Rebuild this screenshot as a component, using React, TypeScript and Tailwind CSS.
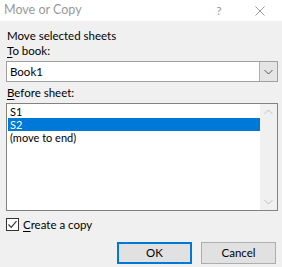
import React from "react";

function Check() {
  return (
    <svg width="11" height="11" viewBox="0 0 11 11">
      <path d="M1.5 5.5 L4.2 8.3 L9.5 2.2" fill="none" stroke="#333" strokeWidth="1.2" />
    </svg>
  );
}

function Chevron({ up }: { up?: boolean }) {
  return (
    <svg width="9" height="6" viewBox="0 0 9 6">
      <path
        d={up ? "M0.5 5 L4.5 1 L8.5 5" : "M0.5 1 L4.5 5 L8.5 1"}
        fill="none"
        stroke="currentColor"
        strokeWidth="1"
      />
    </svg>
  );
}

export default function App() {
  const sheets = ["S1", "S2", "(move to end)"];
  return (
    <div className="w-[282px] h-[267px] bg-[#f0f0f0] text-[11.5px] text-black font-['Segoe_UI','Lato',sans-serif] overflow-hidden">
      <div className="h-[21px] bg-white flex items-center pl-[4px] text-[#999]">
        <span className="flex-1 leading-none text-[12.5px]">Move or Copy</span>
        <span className="w-[12px] text-center mr-[30px] leading-none text-[12px]">?</span>
        <svg width="10" height="10" viewBox="0 0 10 10" className="mr-[17px]">
          <path d="M0.5 0.5 L9.5 9.5 M9.5 0.5 L0.5 9.5" stroke="#999" strokeWidth="1" />
        </svg>
      </div>

      <div className="px-[6px]">
        <div className="mt-[7px] leading-[15px] pl-[1px]">Move selected sheets</div>
        <div className="leading-[15px] pl-[1px]">
          <span className="underline underline-offset-2">T</span>o book:
        </div>

        <div className="mt-[3px] h-[21px] w-[272px] bg-white border border-[#a0a0a0] flex items-center">
          <span className="flex-1 pl-[3px]">Book1</span>
          <div className="h-full w-[18px] bg-[#e5e5e5] border-l border-[#acacac] flex items-center justify-center text-[#555]">
            <Chevron />
          </div>
        </div>

        <div className="mt-[3px] leading-[15px] pl-[1px]">
          <span className="underline underline-offset-2">B</span>efore sheet:
        </div>

        <div className="mt-[3px] h-[108px] w-[272px] bg-white border border-[#828282] flex">
          <div className="flex-1 pt-[1px] pl-[1px] text-[11px]">
            {sheets.map((s) => (
              <div
                key={s}
                className={
                  s === "S2"
                    ? "h-[13px] leading-[13px] pl-[2px] bg-[#0078d7] text-white"
                    : "h-[13px] leading-[13px] pl-[2px]"
                }
              >
                {s}
              </div>
            ))}
          </div>
          <div className="w-[17px] bg-[#f0f0f0] flex flex-col justify-between items-center py-[5px] text-[#c0c0c0]">
            <Chevron up />
            <Chevron />
          </div>
        </div>

        <div className="mt-[6px] flex items-center gap-[4px]">
          <div className="w-[13px] h-[13px] border border-[#333] bg-white flex items-center justify-center">
            <Check />
          </div>
          <span className="leading-[15px]">
            <span className="underline underline-offset-2">C</span>reate a copy
          </span>
        </div>

        <div className="mt-[10px] flex justify-end gap-[9px]">
          <button className="w-[75px] h-[22px] bg-[#e1e1e1] border-2 border-[#0078d7] leading-none">
            OK
          </button>
          <button className="w-[75px] h-[22px] bg-[#e1e1e1] border border-[#adadad] leading-none">
            Cancel
          </button>
        </div>
      </div>
    </div>
  );
}
